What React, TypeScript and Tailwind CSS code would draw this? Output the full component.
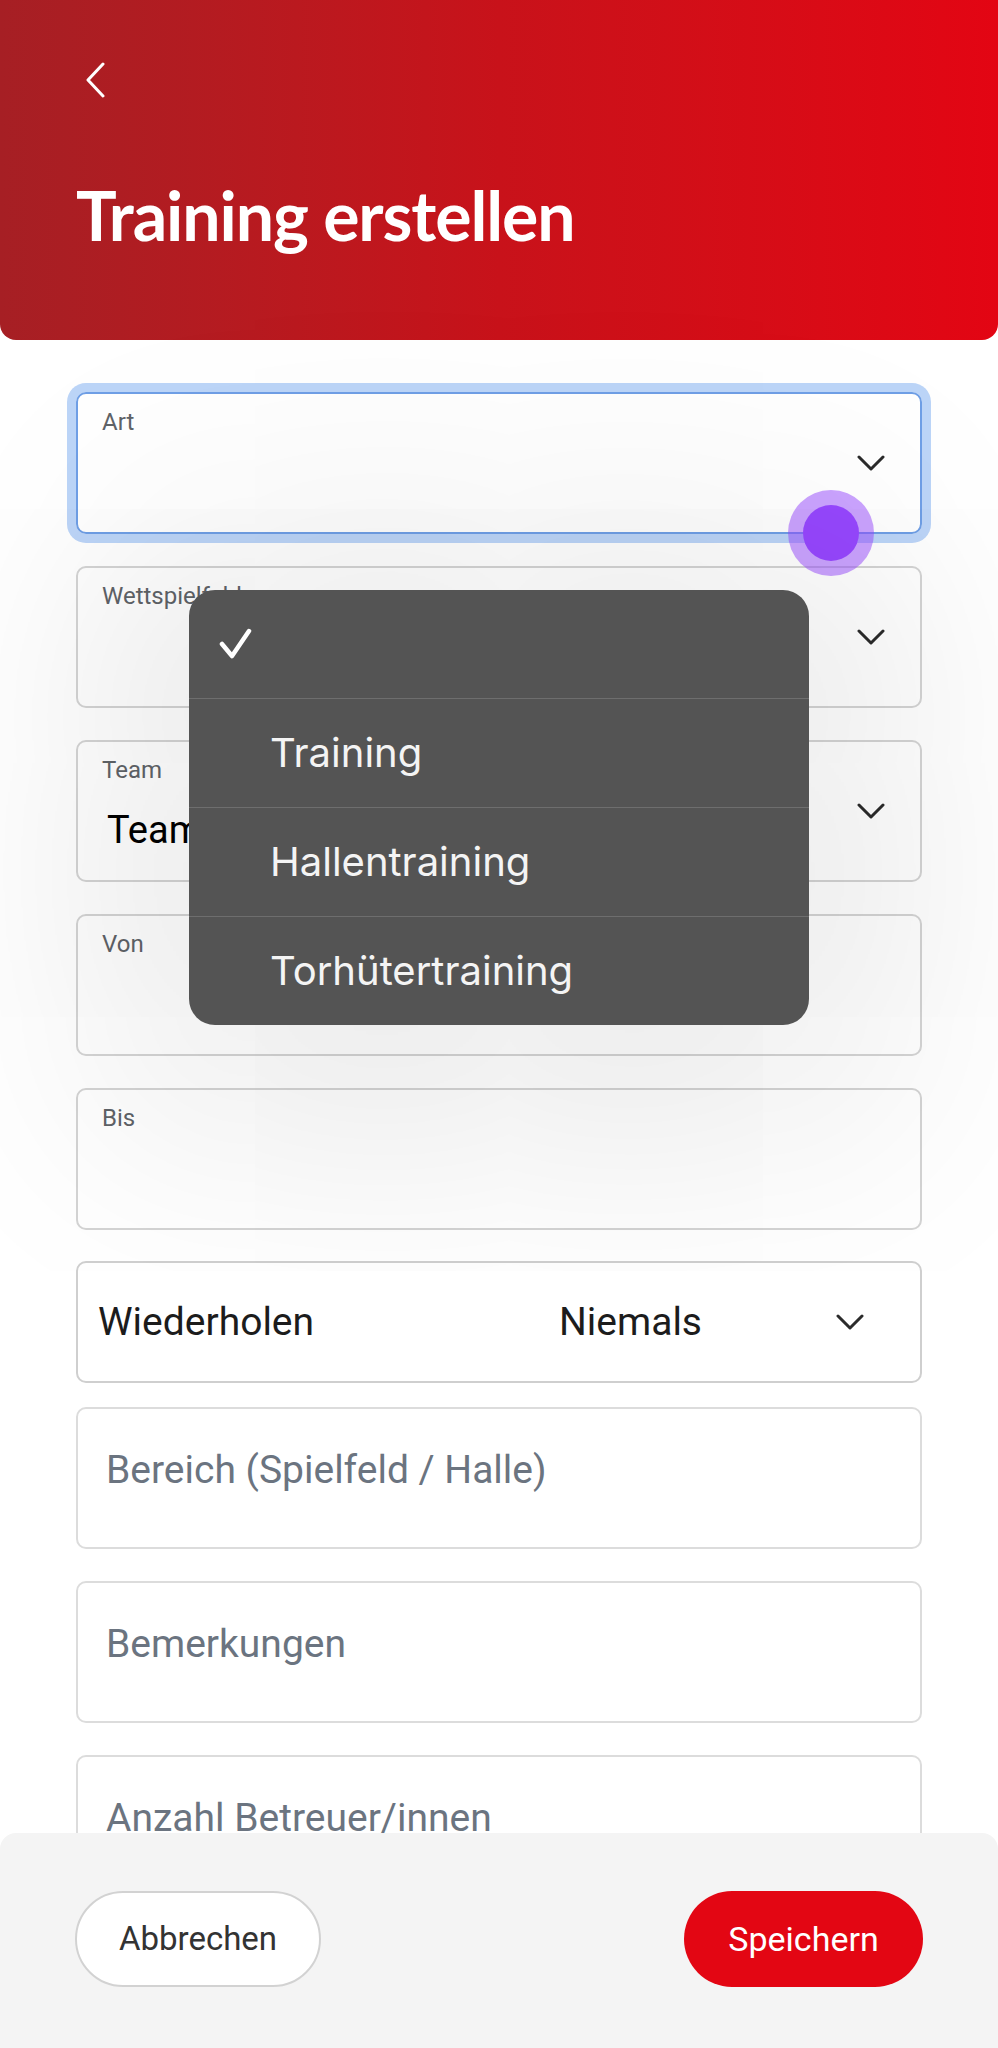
import { useState } from 'react';

const formFont = { fontFamily: "Roboto, 'Liberation Sans', sans-serif" };
const menuFont = { fontFamily: "Inter, Roboto, 'Liberation Sans', sans-serif" };

function Chevron({ className = '' }: { className?: string }) {
  return (
    <svg width="28" height="16" viewBox="0 0 28 16" className={className} fill="none">
      <polyline points="2,2 14,14 26,2" stroke="#2b2b2b" strokeWidth="3" strokeLinecap="round" strokeLinejoin="round" />
    </svg>
  );
}

interface SelectProps {
  label: string;
  value?: string;
  focused?: boolean;
}

function SelectField({ label, value, focused = false }: SelectProps) {
  return (
    <div
      className={
        focused
          ? 'relative h-[142px] rounded-[10px] border-2 border-[#6f9fe6] bg-white/70 ring-[9px] ring-[#bcd5f8]'
          : 'relative h-[142px] rounded-[10px] border-2 border-[#d4d4d4] bg-white/70'
      }
    >
      <div className="flex h-full items-center pr-[35px]">
        <div className="flex-1 self-start pt-[14px]">
          <div className="pl-[24px] text-[24px] leading-[28px] text-[#5f6368]">{label}</div>
          {value && <div className="mt-[24px] pl-[29px] text-[38px] leading-[44px] text-black">{value}</div>}
        </div>
        <Chevron />
      </div>
    </div>
  );
}

function InputField({ label }: { label: string }) {
  return (
    <div className="h-[142px] rounded-[10px] border-2 border-[#d4d4d4] bg-white/70 pl-[24px] pt-[14px]">
      <div className="text-[24px] leading-[28px] text-[#5f6368]">{label}</div>
    </div>
  );
}

function PlaceholderField({ text }: { text: string }) {
  return (
    <div className="h-[142px] rounded-[10px] border-2 border-[#dcdcdc] bg-white pl-[28px] pt-[39px]">
      <div className="text-[39px] leading-[44px] text-[#6b7480]">{text}</div>
    </div>
  );
}

export default function App() {
  const [art] = useState('');
  const options = ['Training', 'Hallentraining', 'Torhütertraining'];

  return (
    <div className="relative h-[2048px] w-full overflow-hidden bg-white" style={formFont}>
      {/* Kopfbereich */}
      <header className="h-[340px] rounded-b-[16px] bg-gradient-to-r from-[#a61f24] via-[#c8121a] to-[#e30513] pl-[76px]">
        <div className="pt-[62px] pl-[8px]">
          <svg width="22" height="36" viewBox="0 0 22 36" fill="none">
            <polyline points="19,2 4,18 19,34" stroke="white" strokeWidth="3" strokeLinecap="round" strokeLinejoin="round" />
          </svg>
        </div>
        <h1
          className="mt-[77px] text-[68px] font-bold leading-[80px] tracking-[-1.1px] text-white"
          style={{ fontFamily: "Lato, 'Open Sans', sans-serif" }}
        >
          Training erstellen
        </h1>
      </header>

      {/* Formular */}
      <main className="flex flex-col gap-8 px-[76px] pt-[52px]">
        <SelectField label="Art" value={art} focused />
        <SelectField label="Wettspielfeld" />
        <SelectField label="Team" value="Team" />
        <InputField label="Von" />
        <InputField label="Bis" />

        <div className="mt-[-1px] mb-[-8px] flex h-[122px] items-center rounded-[10px] border-2 border-[#cfcfcf] bg-white pl-[20px] pr-[56px]">
          <span className="flex-1 text-[39px] leading-[44px] text-[#1c1c1c]">Wiederholen</span>
          <span className="text-[39px] leading-[44px] text-[#1c1c1c]">Niemals</span>
          <Chevron className="ml-[134px]" />
        </div>

        <PlaceholderField text="Bereich (Spielfeld / Halle)" />
        <PlaceholderField text="Bemerkungen" />
        <PlaceholderField text="Anzahl Betreuer/innen" />
      </main>

      {/* Touch-Indikator */}
      <div className="absolute left-[788px] top-[490px] flex h-[86px] w-[86px] items-center justify-center rounded-full bg-[#9747ff]/50">
        <div className="h-[56px] w-[56px] rounded-full bg-[#9747ff]" />
      </div>

      {/* Auswahlmenü */}
      <div
        className="absolute left-[189px] top-[590px] w-[620px] overflow-hidden rounded-[26px] bg-[#545454] shadow-[0_20px_300px_80px_rgba(0,0,0,0.1)]"
        style={menuFont}
      >
        <div className="flex h-[108px] items-center pl-[30px]">
          <svg width="34" height="32" viewBox="0 0 34 32" fill="none">
            <polyline points="3,16 13,28 30,3" stroke="white" strokeWidth="4.5" strokeLinecap="round" strokeLinejoin="round" />
          </svg>
        </div>
        {options.map((o) => (
          <div key={o} className="flex h-[109px] items-center border-t border-[#6e6e6e] pl-[81px] text-[40px] text-[#f4f4f4]">
            {o}
          </div>
        ))}
      </div>

      {/* Fußleiste */}
      <footer className="absolute bottom-0 left-0 right-0 flex h-[215px] items-start justify-between rounded-t-[16px] bg-[#f4f4f4] px-[75px] pt-[58px]">
        <button className="h-[96px] w-[246px] rounded-full border-2 border-[#d2d2d2] bg-white text-[33px] text-[#333]">
          Abbrechen
        </button>
        <button className="h-[96px] w-[239px] rounded-full bg-[#e30613] text-[34px] text-white">Speichern</button>
      </footer>
    </div>
  );
}
